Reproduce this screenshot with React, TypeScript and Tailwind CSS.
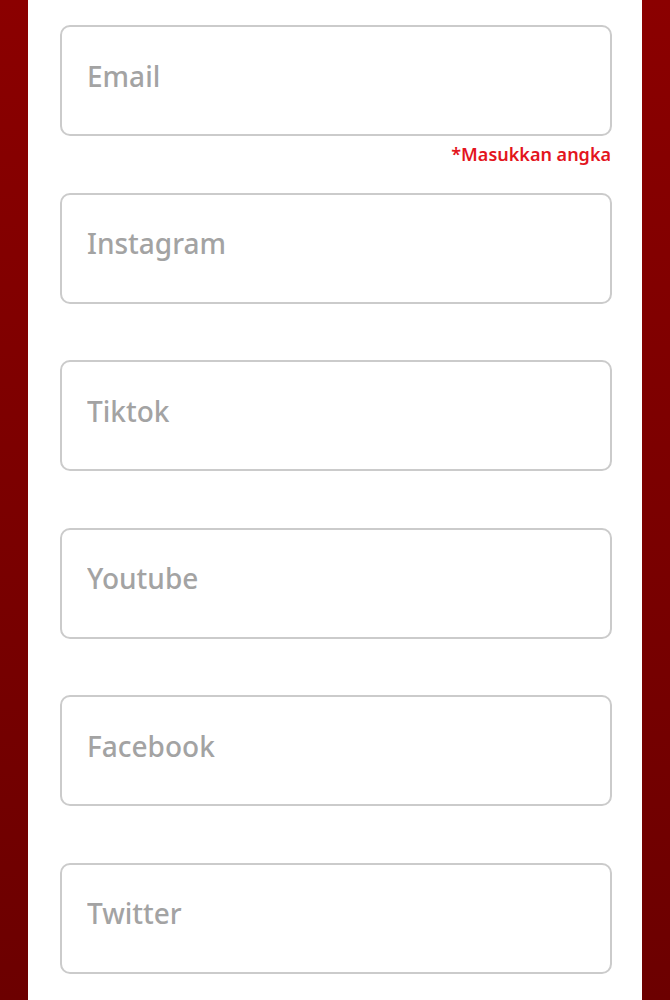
import React from 'react'

interface Field {
    label: string
    error?: string
}

const fields: Field[] = [
    { label: 'Email', error: '*Masukkan angka' },
    { label: 'Instagram' },
    { label: 'Tiktok' },
    { label: 'Youtube' },
    { label: 'Facebook' },
    { label: 'Twitter' },
]

function FormField({ field }: { field: Field }) {
    return (
        <div className="h-[167.6px] flex flex-col">
            <input
                type="text"
                placeholder={field.label}
                className="h-[111px] w-full rounded-[10px] border-2 border-[#cbcbcb] bg-white pl-[25px] pr-[25px] pb-[10px] text-[28px] font-medium text-[#555] placeholder:text-[#a3a3a3] outline-none"
            />
            {field.error && (
                <p className="pt-[6px] text-right text-[18px] leading-6 font-semibold text-[#e3151d] pr-[1px]">
                    {field.error}
                </p>
            )}
        </div>
    )
}

export default function App() {
    return (
        <div
            className="min-h-[1000px] h-[1000px] overflow-hidden flex bg-gradient-to-b from-[#8b0000] to-[#6c0000]"
            style={{ fontFamily: '"Noto Sans", "DejaVu Sans", sans-serif' }}
        >
            <div className="w-[28px] shrink-0" />
            <main className="w-[614px] shrink-0 bg-white pl-[32px] pr-[30px] pt-[25px]">
                {fields.map(f => (
                    <FormField key={f.label} field={f} />
                ))}
            </main>
            <div className="flex-1" />
        </div>
    )
}
